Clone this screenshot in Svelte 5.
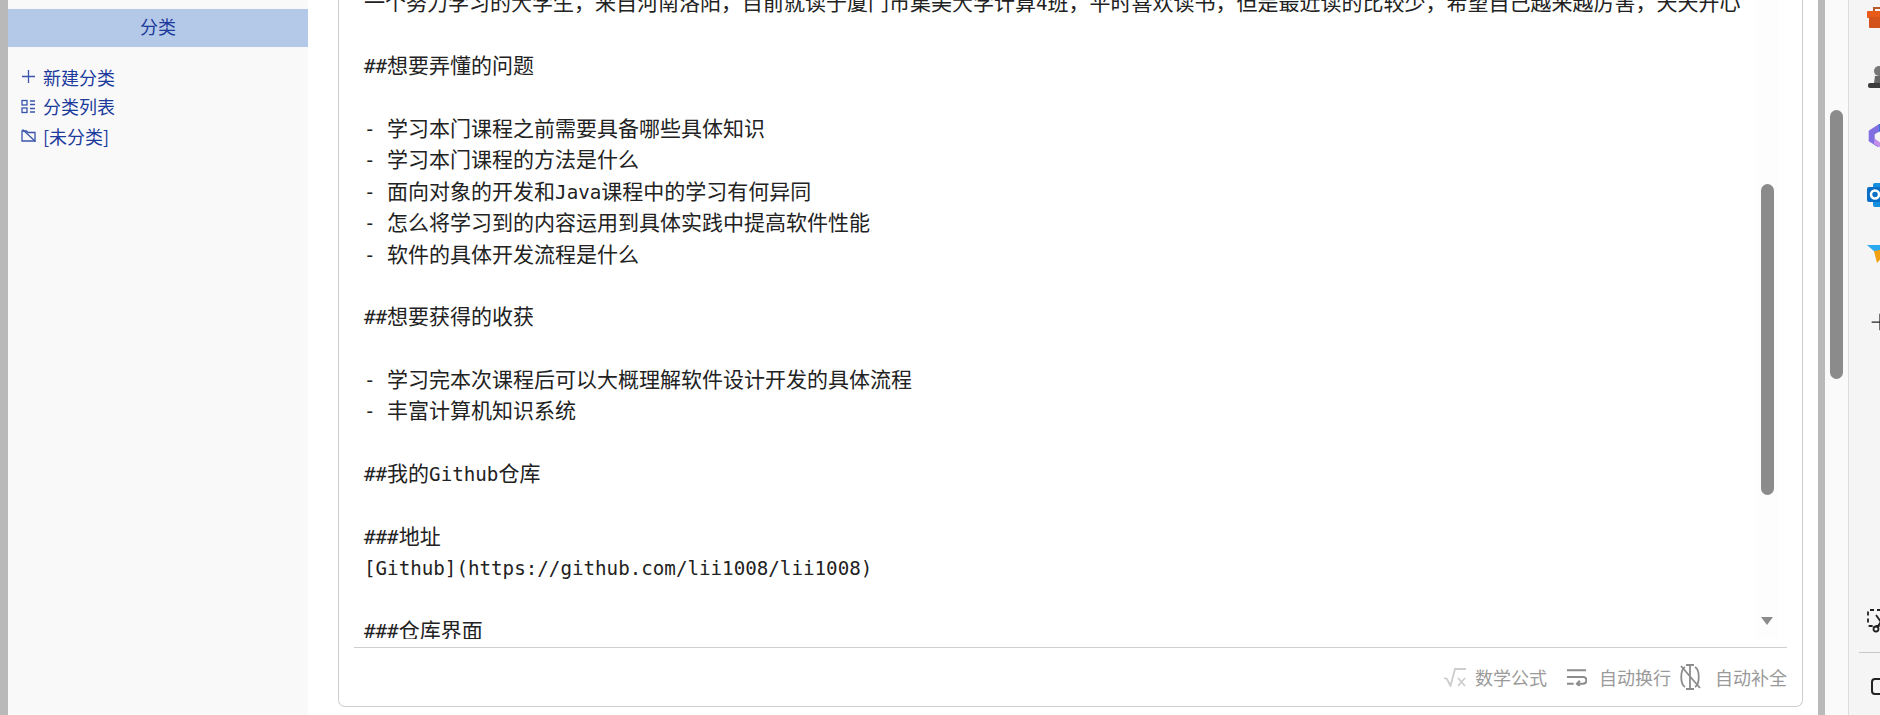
<script lang="ts">
	const source = [
		'一个努力学习的大学生，来自河南洛阳，目前就读于厦门市集美大学计算4班，平时喜欢读书，但是最近读的比较少，希望自己越来越厉害，天天开心',
		'',
		'##想要弄懂的问题',
		'',
		'- 学习本门课程之前需要具备哪些具体知识',
		'- 学习本门课程的方法是什么',
		'- 面向对象的开发和Java课程中的学习有何异同',
		'- 怎么将学习到的内容运用到具体实践中提高软件性能',
		'- 软件的具体开发流程是什么',
		'',
		'##想要获得的收获',
		'',
		'- 学习完本次课程后可以大概理解软件设计开发的具体流程',
		'- 丰富计算机知识系统',
		'',
		'##我的Github仓库',
		'',
		'###地址',
		'[Github](https://github.com/lii1008/lii1008)',
		'',
		'###仓库界面'
	];

	// ascii runs get the mono font, everything else the CJK one
	const lines = source.map((line) => line.match(/[\x20-\x7e]+|[^\x20-\x7e]+/g) ?? []);
	const isAscii = (run: string) => /^[\x20-\x7e]/.test(run);
</script>

<div class="page">
	<div class="strip"></div>

	<aside class="sidebar">
		<div class="side-title">分类</div>
		<ul class="side-menu">
			<li>
				<svg viewBox="0 0 15 15" class="side-icon"><path d="M7.5 1v13M1 7.5h13" /></svg>
				新建分类
			</li>
			<li>
				<svg viewBox="0 0 15 15" class="side-icon">
					<rect x="1" y="1.5" width="5" height="4.5" />
					<rect x="1" y="9" width="5" height="4.5" />
					<path d="M9 2h5M9 5.5h5M9 9.5h5M9 13h5" />
				</svg>
				分类列表
			</li>
			<li>
				<svg viewBox="0 0 15 15" class="side-icon">
					<path d="M1 13V3h4.5l1.5 1.5h7V13z" />
					<path d="M1.5 1.5l13 12" />
				</svg>
				[未分类]
			</li>
		</ul>
	</aside>

	<main class="main">
		<section class="card">
			<div class="editor">
				<div class="text">
					{#each lines as runs}
						<div class="line">
							{#each runs as run}
								{#if isAscii(run)}<span class="mono">{run}</span>{:else}{run}{/if}
							{/each}
						</div>
					{/each}
				</div>
				<div class="track">
					<div class="thumb"></div>
					<div class="arrow"></div>
				</div>
			</div>
			<div class="status">
				<span class="tool math">
					<svg viewBox="0 0 24 20" class="tool-icon pale">
						<path d="M1 11l3 1 3.5 7L12 2h11" />
						<path d="M15 11l7 8M22 11l-7 8" />
					</svg>
					数学公式
				</span>
				<span class="tool">
					<svg viewBox="0 0 22 18" class="tool-icon wrap">
						<path d="M1 2h20M1 9h17a3 3 0 0 1 0 7h-6M1 16h7" />
						<path d="M14.5 13l-3 3 3 3" />
					</svg>
					自动换行
				</span>
				<span class="tool auto">
					<svg viewBox="0 0 24 26" class="tool-icon noauto">
						<path d="M7 3C2 6 2 20 7 23M17 3c5 3 5 17 0 20" />
						<path d="M12 1v24M8 1h8M8 25h8M3 2l19 22" />
					</svg>
					自动补全
				</span>
			</div>
		</section>
	</main>

	<div class="strip narrow"></div>

	<div class="page-scroll">
		<div class="page-thumb"></div>
	</div>

	<nav class="dock">
		<svg viewBox="0 0 24 24" class="app">
			<path d="M7 6V2h10v4" fill="none" stroke="#b9582a" stroke-width="2" />
			<rect x="0" y="5" width="24" height="7" rx="1" fill="#e8591a" />
			<rect x="2" y="11" width="22" height="11" rx="1" fill="#d2521a" />
		</svg>
		<svg viewBox="0 0 24 24" class="app">
			<circle cx="12" cy="6" r="5" fill="#777" />
			<path d="M8 11h8l1 7H7z" fill="#666" />
			<rect x="1" y="18" width="22" height="5" rx="2" fill="#3c3c3c" />
		</svg>
		<svg viewBox="0 0 24 28" class="app">
			<path d="M0 8L12 0v9L7 12v6l5 3-1 6-11-7z" fill="#7f6fe0" />
			<path d="M7 17l12 9-6 1-7-4z" fill="#c48fe8" />
			<path d="M12 0h12v10l-12-1z" fill="#3a6fd8" />
		</svg>
		<svg viewBox="0 0 24 24" class="app">
			<rect x="6" y="0" width="18" height="24" rx="2" fill="#1490df" />
			<rect x="0" y="4" width="15" height="15" rx="2" fill="#0a6fc6" />
			<circle cx="8" cy="11.500" r="4" fill="none" stroke="#fff" stroke-width="2.500" />
		</svg>
		<svg viewBox="0 0 24 24" class="app">
			<path d="M0 3h24v5L8 10z" fill="#29a9f0" />
			<path d="M7 9l17-3-14 15z" fill="#f2a010" />
			<path d="M13 15l11-9v12z" fill="#1c62d8" />
		</svg>
		<svg viewBox="0 0 24 24" class="app add"><path d="M12 2v20M2 12h20" /></svg>
		<div class="dock-end">
			<svg viewBox="0 0 24 24" class="app snip">
				<rect x="1" y="1" width="21" height="16" rx="2" stroke-dasharray="4 3" />
				<circle cx="9" cy="20" r="2.500" />
				<path d="M11 17l7-10M9 6l5 7" />
			</svg>
			<div class="dock-line"></div>
			<div class="dock-box"></div>
		</div>
	</nav>
</div>

<style>
	:global(body) {
		margin: 0;
		overflow: hidden;
	}

	.page {
		display: flex;
		height: 715px;
		overflow: hidden;
		background: #fff;
		font-family: "Noto Sans CJK SC", "Liberation Sans", sans-serif;
	}

	.strip {
		flex: 0 0 8px;
		background: #b9b9b9;
	}

	.strip.narrow {
		flex-basis: 7px;
	}

	/* left category column */
	.sidebar {
		flex: 0 0 300px;
		padding-top: 9px;
		background: #f9f9f9;
		color: #1b3a9c;
		font-size: 18px;
	}

	.side-title {
		height: 38px;
		line-height: 35px;
		text-align: center;
		background: #b4c8e7;
	}

	.side-menu {
		margin: 15px 0 0;
		padding: 0 0 0 13px;
		list-style: none;
	}

	.side-menu li {
		display: flex;
		align-items: center;
		gap: 7px;
		height: 29.600px;
	}

	.side-icon {
		width: 15px;
		height: 15px;
		fill: none;
		stroke: #3a55ac;
		stroke-width: 1.300;
	}

	/* editor card */
	.main {
		flex: 1;
		min-width: 0;
		padding: 0 15px 8px 30px;
	}

	.card {
		display: flex;
		flex-direction: column;
		height: 100%;
		box-sizing: border-box;
		padding: 0 15px;
		border: 1px solid #cfcfcf;
		border-top: 0;
		border-radius: 0 0 7px 7px;
	}

	.editor {
		display: flex;
		flex: none;
		height: 639px;
		overflow: hidden;
	}

	.text {
		flex: 1;
		min-width: 0;
		padding-left: 10px;
		margin-top: -13.600px;
		color: #222;
		font-size: 21px;
	}

	.line {
		height: 31.400px;
		line-height: 31.400px;
		white-space: pre;
	}

	.mono {
		font-family: "DejaVu Sans Mono", monospace;
		font-size: 19.200px;
	}

	.track {
		position: relative;
		flex: 0 0 23px;
		margin-right: 8px;
		background: #fdfdfd;
	}

	.thumb {
		width: 13px;
		height: 311px;
		margin: 184px 0 0 5px;
		border-radius: 7px;
		background: #8b8b8b;
	}

	.arrow {
		position: absolute;
		left: 5px;
		top: 617px;
		border: solid transparent;
		border-width: 8px 6.500px 0;
		border-top-color: #8b8b8b;
	}

	.status {
		display: flex;
		flex: none;
		justify-content: flex-end;
		align-items: center;
		gap: 7px;
		height: 58px;
		margin-top: 8px;
		border-top: 1px solid #cfcfcf;
		color: #9a9a9a;
		font-size: 18px;
	}

	.tool {
		display: flex;
		align-items: center;
		gap: 12px;
	}

	.tool.math {
		gap: 8px;
		margin-right: 12px;
	}

	.tool.auto {
		gap: 13px;
	}

	.tool-icon {
		width: 21px;
		height: 18px;
		fill: none;
		stroke: #8c8c8c;
		stroke-width: 2.200;
	}

	.tool-icon.pale {
		width: 24px;
		height: 20px;
		stroke: #cdcdcd;
		stroke-width: 1.800;
	}

	.tool-icon.noauto {
		width: 24px;
		height: 26px;
		stroke-width: 1.800;
	}

	/* browser page scrollbar */
	.page-scroll {
		flex: 0 0 23px;
		background: #fafafa;
		border-right: 1px solid #dcdcdc;
	}

	.page-thumb {
		width: 13px;
		height: 269px;
		margin: 110px 0 0 5px;
		border-radius: 7px;
		background: #8b8b8b;
	}

	/* docked app icons, cut by the window edge */
	.dock {
		flex: 0 0 31px;
		display: flex;
		flex-direction: column;
		gap: 35px;
		padding: 6px 0 0 18px;
		box-sizing: border-box;
		background: #f5f5f5;
		overflow: hidden;
	}

	.app {
		flex: none;
		width: 24px;
		height: 24px;
	}

	.add {
		margin: 11px 0 0 3px;
		width: 20px;
		height: 20px;
		fill: none;
		stroke: #222;
		stroke-width: 1.500;
	}

	.snip {
		fill: none;
		stroke: #222;
		stroke-width: 1.800;
	}

	.dock-end {
		display: flex;
		flex-direction: column;
		margin-top: auto;
		padding-bottom: 20px;
	}

	.dock-line {
		width: 30px;
		height: 1px;
		margin: 19px 0 25px -8px;
		background: #c8c8c8;
	}

	.dock-box {
		width: 20px;
		height: 17px;
		margin-left: 4px;
		box-sizing: border-box;
		border: 2px solid #222;
		border-radius: 4px;
	}
</style>
